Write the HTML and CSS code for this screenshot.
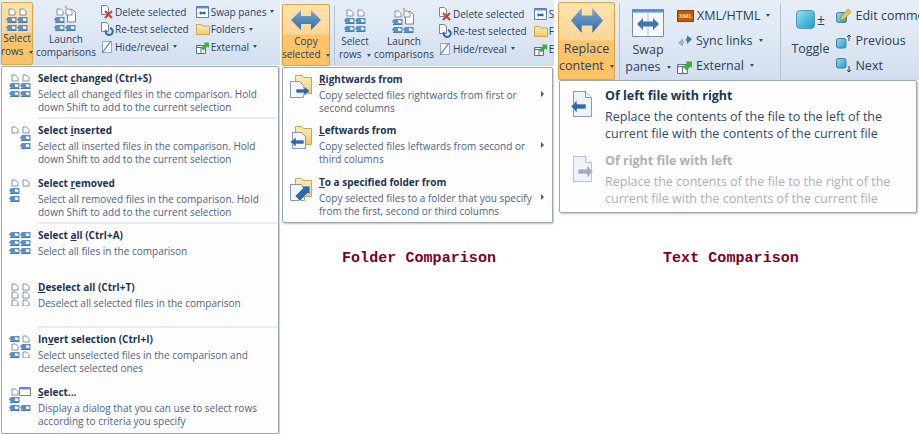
FILE: index.html
```html
<!DOCTYPE html>
<html lang="en">
<head>
    <meta charset="UTF-8">
    <title>Select rows, Copy selected and Replace content menus</title>
    <link rel="stylesheet" href="styles.css">
</head>
<body>
    <!-- Shared icon parts -->
    <svg class="icon-defs" width="0" height="0">
        <defs>
            <linearGradient id="blue-arrow" x1="0" y1="0" x2="0" y2="1">
                <stop offset="0" stop-color="#7fa6d0"/>
                <stop offset="1" stop-color="#2f6aa6"/>
            </linearGradient>
            <linearGradient id="aqua" x1="0" y1="0" x2="1" y2="1">
                <stop offset="0" stop-color="#8fe0f2"/>
                <stop offset="1" stop-color="#1b9ccb"/>
            </linearGradient>
            <linearGradient id="folder" x1="0" y1="0" x2="0" y2="1">
                <stop offset="0" stop-color="#fdf0b8"/>
                <stop offset="1" stop-color="#eec966"/>
            </linearGradient>
        </defs>
        <symbol id="pg" viewBox="0 0 8 8">
            <path d="M1 1h3.500L7 3.500V7H1z" fill="#fff" stroke="#76849a" stroke-width=".9"/>
        </symbol>
        <symbol id="bl" viewBox="0 0 11 7">
            <path d="M0 3.500 2 1h8.500v5H2z" fill="#5a90c6"/>
            <path d="M6 2.200h2.200l1 1v1.700H6z" fill="#f4f8fc"/>
            <path d="M1 6h9.500v1H1z" fill="#4a7cae"/>
        </symbol>
        <symbol id="dbl-arrow" viewBox="0 0 30 20">
            <path d="M0 10 10 0v6h10V0l10 10-10 10v-6H10v6z" fill="url(#blue-arrow)"/>
        </symbol>
    </svg>

    <!-- Folder comparison: Select rows -->
    <div class="shot shot-left">
        <div class="ribbon">
            <div class="rb-big rb-active rb-select">
                <svg class="rb-icon" width="24" height="24" viewBox="0 0 24 24">
                    <use href="#pg" x="3" y="1" width="8" height="8"/><use href="#pg" x="14" y="1" width="8" height="8"/>
                    <use href="#bl" x="1" y="9" width="11" height="7"/><use href="#bl" x="12" y="9" width="11" height="7"/>
                    <use href="#bl" x="1" y="17" width="11" height="7"/><use href="#bl" x="12" y="17" width="11" height="7"/>
                </svg>
                <span class="rb-label">Select</span>
                <span class="rb-label">rows <i class="caret"></i></span>
            </div>
            <div class="rb-big rb-launch">
                <svg class="rb-icon" width="26" height="26" viewBox="0 0 26 26">
                    <path d="M14.500 4.500h5l3 3V17h-8z" fill="#fff" stroke="#76849a"/>
                    <circle cx="13" cy="2" r="1" fill="#e8896a"/>
                    <use href="#pg" x="3" y="3" width="8" height="8"/><use href="#pg" x="12" y="3" width="8" height="8"/>
                    <use href="#bl" x="1" y="11" width="11" height="7"/>
                    <use href="#bl" x="1" y="19" width="11" height="7"/><use href="#bl" x="12" y="19" width="11" height="7"/>
                </svg>
                <span class="rb-label">Launch</span>
                <span class="rb-label">comparisons</span>
            </div>
            <div class="rb-col rb-col-first">
                <div class="rb-row">
                    <svg width="14" height="14" viewBox="0 0 14 14"><path d="M1.500 .5h5l2 2v7h-7z" fill="#fff" stroke="#76849a"/><path d="m5 6 7 7m0-7-7 7" stroke="#d2402c" stroke-width="2.200"/></svg>
                    Delete selected
                </div>
                <div class="rb-row">
                    <svg width="14" height="14" viewBox="0 0 14 14"><path d="M1.500 .5h5l2 2v7h-7z" fill="#fff" stroke="#76849a"/><path d="M6 8a3.500 3.500 0 1 0 4-2" fill="none" stroke="#2f6aa6" stroke-width="2"/></svg>
                    Re-test selected
                </div>
                <div class="rb-row">
                    <svg width="14" height="14" viewBox="0 0 14 14"><path d="M2.500 1.500h9v11h-9z" fill="#f4f7fb" stroke="#9aa8bb"/><path d="m2 13 9-12" stroke="#5c7fa8" stroke-width="1.200"/></svg>
                    Hide/reveal <i class="caret"></i>
                </div>
            </div>
            <div class="rb-col">
                <div class="rb-row">
                    <svg width="14" height="14" viewBox="0 0 14 14"><path d="M.5 1.500h12v11H.5z" fill="#fff" stroke="#5d7fae"/><path d="M1 2h11v1.500H1z" fill="#5d8fd6"/><path d="m3 8 2-2v1h3V6l2 2-2 2V9H5v1z" fill="#2f6aa6"/></svg>
                    Swap panes <i class="caret"></i>
                </div>
                <div class="rb-row">
                    <svg width="14" height="14" viewBox="0 0 14 14"><path d="M.5 2.500h5l1 1.500h7v8.500H.5z" fill="url(#folder)" stroke="#c9a64f"/></svg>
                    Folders <i class="caret"></i>
                </div>
                <div class="rb-row">
                    <svg width="14" height="14" viewBox="0 0 14 14"><path d="M.5 5.500h9v8h-9zM.5 7.500h9M5 7.500v6" fill="#fff" stroke="#5a6f8c"/><path d="m5 8 4-4-1.500-1.500H13V8l-1.500-1.500-4 4z" fill="#3fae3f"/></svg>
                    External <i class="caret"></i>
                </div>
            </div>
        </div>
        <div class="menu menu-rows">
            <div class="menu-item item-sep">
                <svg class="menu-icon" width="24" height="24" viewBox="0 0 24 24">
                    <use href="#pg" x="3" y="1" width="8" height="8"/><use href="#pg" x="14" y="1" width="8" height="8"/>
                    <use href="#bl" x="1" y="9" width="11" height="7"/><use href="#bl" x="12" y="9" width="11" height="7"/>
                    <use href="#bl" x="1" y="17" width="11" height="7"/><use href="#bl" x="12" y="17" width="11" height="7"/>
                </svg>
                <div class="menu-text">
                    <div class="menu-title">Select <u>c</u>hanged (Ctrl+S)</div>
                    <div class="menu-desc">Select all changed files in the comparison. Hold down Shift to add to the current selection</div>
                </div>
            </div>
            <div class="menu-item">
                <svg class="menu-icon" width="24" height="24" viewBox="0 0 24 24">
                    <use href="#pg" x="3" y="1" width="8" height="8"/><use href="#pg" x="14" y="1" width="8" height="8"/>
                    <use href="#bl" x="12" y="9" width="11" height="7"/>
                    <use href="#bl" x="12" y="17" width="11" height="7"/>
                </svg>
                <div class="menu-text">
                    <div class="menu-title">Select <u>i</u>nserted</div>
                    <div class="menu-desc">Select all inserted files in the comparison. Hold down Shift to add to the current selection</div>
                </div>
            </div>
            <div class="menu-item item-sep">
                <svg class="menu-icon" width="24" height="24" viewBox="0 0 24 24">
                    <use href="#pg" x="3" y="1" width="8" height="8"/><use href="#pg" x="14" y="1" width="8" height="8"/>
                    <use href="#bl" x="1" y="9" width="11" height="7"/>
                    <use href="#bl" x="1" y="17" width="11" height="7"/>
                </svg>
                <div class="menu-text">
                    <div class="menu-title">Select <u>r</u>emoved</div>
                    <div class="menu-desc">Select all removed files in the comparison. Hold down Shift to add to the current selection</div>
                </div>
            </div>
            <div class="menu-item">
                <svg class="menu-icon" width="24" height="24" viewBox="0 0 24 24">
                    <use href="#bl" x="1" y="1" width="11" height="7"/><use href="#bl" x="12" y="1" width="11" height="7"/>
                    <use href="#bl" x="1" y="9" width="11" height="7"/><use href="#bl" x="12" y="9" width="11" height="7"/>
                    <use href="#bl" x="1" y="17" width="11" height="7"/><use href="#bl" x="12" y="17" width="11" height="7"/>
                </svg>
                <div class="menu-text">
                    <div class="menu-title">Select <u>a</u>ll (Ctrl+A)</div>
                    <div class="menu-desc">Select all files in the comparison</div>
                </div>
            </div>
            <div class="menu-item item-sep">
                <svg class="menu-icon" width="24" height="24" viewBox="0 0 24 24">
                    <use href="#pg" x="3" y="1" width="8" height="8"/><use href="#pg" x="14" y="1" width="8" height="8"/>
                    <use href="#pg" x="3" y="9" width="8" height="8"/><use href="#pg" x="14" y="9" width="8" height="8"/>
                    <use href="#pg" x="3" y="17" width="8" height="8"/><use href="#pg" x="14" y="17" width="8" height="8"/>
                </svg>
                <div class="menu-text">
                    <div class="menu-title"><u>D</u>eselect all (Ctrl+T)</div>
                    <div class="menu-desc">Deselect all selected files in the comparison</div>
                </div>
            </div>
            <div class="menu-item">
                <svg class="menu-icon" width="24" height="24" viewBox="0 0 24 24">
                    <use href="#bl" x="1" y="1" width="11" height="7"/><use href="#pg" x="14" y="1" width="8" height="8"/>
                    <use href="#pg" x="3" y="9" width="8" height="8"/><use href="#bl" x="12" y="9" width="11" height="7"/>
                    <use href="#bl" x="1" y="17" width="11" height="7"/><use href="#pg" x="14" y="17" width="8" height="8"/>
                </svg>
                <div class="menu-text">
                    <div class="menu-title">In<u>v</u>ert selection (Ctrl+I)</div>
                    <div class="menu-desc">Select unselected files in the comparison and deselect selected ones</div>
                </div>
            </div>
            <div class="menu-item">
                <svg class="menu-icon" width="24" height="24" viewBox="0 0 24 24">
                    <use href="#pg" x="3" y="1" width="8" height="8"/>
                    <path d="M11.500 .5h11v8h-11z" fill="#fff" stroke="#6f86a8"/><path d="M12 1h10v1.500H12z" fill="#5d8fd6"/>
                    <use href="#bl" x="1" y="9" width="11" height="7"/>
                    <use href="#bl" x="1" y="17" width="11" height="7"/><use href="#bl" x="12" y="17" width="11" height="7"/>
                </svg>
                <div class="menu-text">
                    <div class="menu-title"><u>S</u>elect...</div>
                    <div class="menu-desc">Display a dialog that you can use to select rows according to criteria you specify</div>
                </div>
            </div>
        </div>
    </div>

    <!-- Folder comparison: Copy selected -->
    <div class="shot shot-mid">
        <div class="ribbon">
            <div class="rb-big rb-active rb-copy">
                <svg class="rb-icon" width="30" height="20"><use href="#dbl-arrow" width="30" height="20"/></svg>
                <span class="rb-label">Copy</span>
                <span class="rb-label">selected <i class="caret"></i></span>
            </div>
            <div class="rb-divider"></div>
            <div class="rb-big rb-select">
                <svg class="rb-icon" width="24" height="24" viewBox="0 0 24 24">
                    <use href="#pg" x="3" y="1" width="8" height="8"/><use href="#pg" x="14" y="1" width="8" height="8"/>
                    <use href="#bl" x="1" y="9" width="11" height="7"/><use href="#bl" x="12" y="9" width="11" height="7"/>
                    <use href="#bl" x="1" y="17" width="11" height="7"/><use href="#bl" x="12" y="17" width="11" height="7"/>
                </svg>
                <span class="rb-label">Select</span>
                <span class="rb-label">rows <i class="caret"></i></span>
            </div>
            <div class="rb-big rb-launch">
                <svg class="rb-icon" width="26" height="26" viewBox="0 0 26 26">
                    <path d="M14.500 4.500h5l3 3V17h-8z" fill="#fff" stroke="#76849a"/>
                    <circle cx="13" cy="2" r="1" fill="#e8896a"/>
                    <use href="#pg" x="3" y="3" width="8" height="8"/><use href="#pg" x="12" y="3" width="8" height="8"/>
                    <use href="#bl" x="1" y="11" width="11" height="7"/>
                    <use href="#bl" x="1" y="19" width="11" height="7"/><use href="#bl" x="12" y="19" width="11" height="7"/>
                </svg>
                <span class="rb-label">Launch</span>
                <span class="rb-label">comparisons</span>
            </div>
            <div class="rb-col rb-col-first">
                <div class="rb-row">
                    <svg width="14" height="14" viewBox="0 0 14 14"><path d="M1.500 .5h5l2 2v7h-7z" fill="#fff" stroke="#76849a"/><path d="m5 6 7 7m0-7-7 7" stroke="#d2402c" stroke-width="2.200"/></svg>
                    Delete selected
                </div>
                <div class="rb-row">
                    <svg width="14" height="14" viewBox="0 0 14 14"><path d="M1.500 .5h5l2 2v7h-7z" fill="#fff" stroke="#76849a"/><path d="M6 8a3.500 3.500 0 1 0 4-2" fill="none" stroke="#2f6aa6" stroke-width="2"/></svg>
                    Re-test selected
                </div>
                <div class="rb-row">
                    <svg width="14" height="14" viewBox="0 0 14 14"><path d="M2.500 1.500h9v11h-9z" fill="#f4f7fb" stroke="#9aa8bb"/><path d="m2 13 9-12" stroke="#5c7fa8" stroke-width="1.200"/></svg>
                    Hide/reveal <i class="caret"></i>
                </div>
            </div>
            <div class="rb-col">
                <div class="rb-row">
                    <svg width="14" height="14" viewBox="0 0 14 14"><path d="M.5 1.500h12v11H.5z" fill="#fff" stroke="#5d7fae"/><path d="M1 2h11v1.500H1z" fill="#5d8fd6"/><path d="m3 8 2-2v1h3V6l2 2-2 2V9H5v1z" fill="#2f6aa6"/></svg>
                    Swap
                </div>
                <div class="rb-row">
                    <svg width="14" height="14" viewBox="0 0 14 14"><path d="M.5 2.500h5l1 1.500h7v8.500H.5z" fill="url(#folder)" stroke="#c9a64f"/></svg>
                    Folders
                </div>
                <div class="rb-row">
                    <svg width="14" height="14" viewBox="0 0 14 14"><path d="M.5 5.500h9v8h-9zM.5 7.500h9M5 7.500v6" fill="#fff" stroke="#5a6f8c"/><path d="m5 8 4-4-1.500-1.500H13V8l-1.500-1.500-4 4z" fill="#3fae3f"/></svg>
                    External
                </div>
            </div>
        </div>
        <div class="menu menu-copy">
            <div class="menu-item">
                <svg class="menu-icon" width="24" height="26" viewBox="0 0 24 26">
                    <path d="M6.500 1.500h6l2 2h8v16h-16z" fill="url(#folder)" stroke="#c9a64f"/>
                    <path d="M1.500 7.500h9l4 4v12h-13z" fill="#f2f5fb" stroke="#8a97ad"/>
                    <path d="M7 15h8v-3l6 5-6 5v-3H7z" fill="#2f6aa6" stroke="#fff" stroke-width=".6"/>
                </svg>
                <div class="menu-text">
                    <div class="menu-title"><u>R</u>ightwards from</div>
                    <div class="menu-desc">Copy selected files rightwards from first or second columns</div>
                </div>
                <i class="chevron"></i>
            </div>
            <div class="menu-item">
                <svg class="menu-icon" width="24" height="26" viewBox="0 0 24 26">
                    <path d="M6.500 1.500h6l2 2h8v16h-16z" fill="url(#folder)" stroke="#c9a64f"/>
                    <path d="M3.500 7.500h9l4 4v12h-13z" fill="#f2f5fb" stroke="#8a97ad"/>
                    <path d="M15 15H7v-3l-6 5 6 5v-3h8z" fill="#2f6aa6" stroke="#fff" stroke-width=".6"/>
                </svg>
                <div class="menu-text">
                    <div class="menu-title"><u>L</u>eftwards from</div>
                    <div class="menu-desc">Copy selected files leftwards from second or third columns</div>
                </div>
                <i class="chevron"></i>
            </div>
            <div class="menu-item">
                <svg class="menu-icon" width="24" height="26" viewBox="0 0 24 26">
                    <path d="M6.500 1.500h6l2 2h8v16h-16z" fill="url(#folder)" stroke="#c9a64f"/>
                    <path d="M1.500 7.500h11l3 3v13h-14z" fill="#f2f5fb" stroke="#8a97ad"/>
                    <path d="m6 19 8-8-2-2h9v9l-2-2-8 8z" fill="#2f6aa6" stroke="#fff" stroke-width=".6"/>
                </svg>
                <div class="menu-text">
                    <div class="menu-title"><u>T</u>o a specified folder from</div>
                    <div class="menu-desc">Copy selected files to a folder that you specify from the first, second or third columns</div>
                </div>
                <i class="chevron"></i>
            </div>
        </div>
        <div class="caption caption-folder">Folder Comparison</div>
    </div>

    <!-- Text comparison: Replace content -->
    <div class="shot shot-right">
        <div class="ribbon">
            <div class="rb-big rb-active rb-replace">
                <svg class="rb-icon" width="32" height="25" viewBox="0 0 30 20" preserveAspectRatio="none"><use href="#dbl-arrow" width="30" height="20"/></svg>
                <span class="rb-label">Replace</span>
                <span class="rb-label">content <i class="caret"></i></span>
            </div>
            <div class="rb-divider"></div>
            <div class="rb-big rb-swap">
                <svg class="rb-icon" width="32" height="28" viewBox="0 0 32 28">
                    <path d="M.5.5h31v27H.5z" fill="#f6f8fb" stroke="#7f8da3"/>
                    <path d="M0 0h32v3.500H0z" fill="#5d8fd6"/>
                    <path d="M16 3.500v24" stroke="#b5bfce"/>
                    <path d="m5 15 6-6v3.500h10V9l6 6-6 6v-3.500H11V21z" fill="#3d77b0"/>
                </svg>
                <span class="rb-label">Swap</span>
                <span class="rb-label">panes <i class="caret"></i></span>
            </div>
            <div class="rb-col rb-col-xml">
                <div class="rb-row">
                    <span class="xml-badge">XML</span>
                    XML/HTML <i class="caret"></i>
                </div>
                <div class="rb-row">
                    <svg width="16" height="16" viewBox="0 0 16 16"><path d="M1 10 6 5v2.500L7.500 9 6 11v2.500z" fill="#9bb0cb"/><path d="m15 6-5 5V8.500L8.500 7 10 5V2.500z" fill="#3d77b0"/></svg>
                    Sync links <i class="caret"></i>
                </div>
                <div class="rb-row">
                    <svg width="16" height="16" viewBox="0 0 16 16"><path d="M.5 6.500h10v9H.5zM.5 8.500h10M5.500 8.500v7" fill="#fff" stroke="#5a6f8c"/><path d="m6 9 4-4-1.500-1.500H15V10l-1.500-1.500-4 4z" fill="#3fae3f"/></svg>
                    External <i class="caret"></i>
                </div>
            </div>
            <div class="rb-divider rb-divider-wide"></div>
            <div class="rb-big rb-toggle">
                <div class="toggle-icon"><span class="toggle-box"></span><span class="toggle-sign">±</span></div>
                <span class="rb-label">Toggle</span>
            </div>
            <div class="rb-col rb-col-comments">
                <div class="rb-row">
                    <svg width="16" height="16" viewBox="0 0 16 16"><rect x=".5" y="4.500" width="10" height="10" rx="2" fill="url(#aqua)" stroke="#4a7c96"/><path d="m5 9 7-8 3 2.500-7 8-3.500 1z" fill="#f3c14b" stroke="#a3772a" stroke-width=".6"/></svg>
                    Edit comment
                </div>
                <div class="rb-row">
                    <svg width="16" height="16" viewBox="0 0 16 16"><rect x=".5" y="5.500" width="9.500" height="9.500" rx="2" fill="url(#aqua)" stroke="#4a7c96"/><path d="M13 8V2m-2 2 2-2 2 2" fill="none" stroke="#333f50"/></svg>
                    Previous
                </div>
                <div class="rb-row">
                    <svg width="16" height="16" viewBox="0 0 16 16"><rect x=".5" y=".5" width="9.500" height="9.500" rx="2" fill="url(#aqua)" stroke="#4a7c96"/><path d="M13 8v6m-2-2 2 2 2-2" fill="none" stroke="#333f50"/></svg>
                    Next
                </div>
            </div>
        </div>
        <div class="menu menu-replace">
            <div class="menu-item">
                <svg class="menu-icon" width="28" height="28" viewBox="0 0 28 28">
                    <path d="M5.500 1.500h12l6 6v19h-18z" fill="#eef3fb" stroke="#8a9ab5"/>
                    <path d="M17.500 1.500v6h6" fill="#fff" stroke="#8a9ab5"/>
                    <path d="M18 12v5H9v4l-6-6.500L9 8v4z" fill="#2f6aa6" stroke="#fff" stroke-width=".6" transform="translate(0 2)"/>
                </svg>
                <div class="menu-text">
                    <div class="menu-title">Of left file with right</div>
                    <div class="menu-desc">Replace the contents of the file to the left of the current file with the contents of the current file</div>
                </div>
            </div>
            <div class="menu-item item-disabled">
                <svg class="menu-icon" width="28" height="28" viewBox="0 0 28 28">
                    <path d="M5.500 1.500h12l6 6v19h-18z" fill="#eef3fb" stroke="#b4c1d8"/>
                    <path d="M17.500 1.500v6h6" fill="#fff" stroke="#b4c1d8"/>
                    <path d="M10 12v5h9v4l6-6.500L19 8v4z" fill="#9dadc8" stroke="#fff" stroke-width=".6" transform="translate(0 2)"/>
                </svg>
                <div class="menu-text">
                    <div class="menu-title">Of right file with left</div>
                    <div class="menu-desc">Replace the contents of the file to the right of the current file with the contents of the current file</div>
                </div>
            </div>
        </div>
        <div class="caption caption-text">Text Comparison</div>
    </div>
</body>
</html>
```

FILE: styles.css
```css
/* Page */
body {
    margin: 0;
    width: 919px;
    height: 434px;
    display: flex;
    overflow: hidden;
    background: #fff;
    font-family: "Open Sans", sans-serif;
    color: #1d3557;
}

.icon-defs {
    flex: none;
}

/* The three cut-outs */
.shot {
    flex: none;
    overflow: hidden;
}

.shot-left {
    width: 280px;
    font-size: 10px;
}

.shot-mid {
    width: 273px;
    margin-left: 1px;
    font-size: 10px;
}

.shot-right {
    width: 361px;
    margin-left: 4px;
    font-size: 12.5px;
}

/* Ribbon */
.ribbon {
    display: flex;
    align-items: flex-start;
    overflow: hidden;
    white-space: nowrap;
    background: linear-gradient(#e6eef8, #dde7f3 55%, #d1deee);
    color: #2a3f5f;
}

.shot-left .ribbon {
    height: 63px;
    padding: 2px 0 0 1px;
}

.shot-mid .ribbon {
    height: 62px;
    padding: 4px 0 0 1px;
}

.shot-right .ribbon {
    height: 78px;
    padding: 2px 0 0 0;
}

.rb-big {
    flex: none;
    display: flex;
    flex-direction: column;
    align-items: center;
    box-sizing: border-box;
    line-height: 13px;
}

.rb-active {
    height: 100%;
    border: 1px solid #dba544;
    border-radius: 2px;
    background: linear-gradient(#fee2ad, #fdd797 48%, #fcc46b 50%, #fbc266);
}

.rb-select {
    width: 32px;
}

.rb-launch {
    width: 62px;
    margin-left: 2px;
}

.rb-launch .rb-icon {
    margin: 3px 0 2px;
}

.rb-select .rb-icon {
    margin: 4px 0 3px;
}

.rb-active.rb-select .rb-icon {
    margin-bottom: 1px;
}

.rb-copy {
    width: 48px;
}

.rb-copy .rb-icon {
    margin: 5px 0;
}

.rb-divider {
    flex: none;
    width: 1px;
    align-self: stretch;
    margin: 1px 4px;
    background: #b4c3d6;
}

.rb-col {
    flex: none;
    display: flex;
    flex-direction: column;
    margin-left: 7px;
}

.rb-col-first {
    margin-left: 3px;
}

.rb-row {
    display: flex;
    align-items: center;
    gap: 1px;
    height: 17.500px;
}

.shot-left .rb-row:first-child,
.shot-mid .rb-row:first-child {
    margin-top: 1px;
}

.caret {
    display: inline-block;
    width: 0;
    height: 0;
    margin-left: 3px;
    border-top: 3px solid #3c4d66;
    border-left: 2.500px solid transparent;
    border-right: 2.500px solid transparent;
    vertical-align: middle;
}

/* Bigger ribbon on the text comparison */
.shot-right .rb-big {
    line-height: 17px;
}

.rb-replace {
    width: 57px;
}

.rb-replace .rb-icon {
    margin: 5px 0 7px;
}

.rb-swap {
    width: 48px;
}

.rb-swap .rb-icon {
    margin: 7px 0 4px;
}

.rb-col-xml {
    margin-left: 5px;
    padding-top: 1px;
}

.rb-divider-wide {
    margin-left: 10px;
}

.shot-right .rb-row {
    height: 25px;
    gap: 3px;
}

.xml-badge {
    width: 15px;
    height: 10px;
    background: #c4590c;
    border: 1px solid #8e3f06;
    color: #ffe3a6;
    font-size: 6px;
    font-weight: bold;
    line-height: 10px;
    text-align: center;
}

.rb-toggle {
    width: 46px;
    margin-left: 2px;
}

.toggle-icon {
    display: flex;
    align-items: center;
    height: 24px;
    margin: 5px 0 9px;
}

.toggle-box {
    width: 17px;
    height: 17px;
    border: 1px solid #5a95b3;
    border-radius: 4px;
    background: linear-gradient(135deg, #8fe0f2, #1b9ccb);
}

.toggle-sign {
    margin-left: 2px;
    font-size: 14px;
}

.rb-col-comments {
    margin-left: 3px;
    padding-top: 1px;
}

/* Drop-down menus */
.menu {
    display: flex;
    flex-direction: column;
    box-sizing: border-box;
    margin: 1px 1px 0 1px;
    border: 1px solid #9ea7b4;
    border-radius: 2px;
    background: #fdfdfe;
    box-shadow: 1px 1px 2px rgba(0, 0, 0, 0.25);
}

.menu-rows {
    height: 368px;
}

.menu-copy {
    height: 156px;
}

.menu-replace {
    height: 133px;
    margin: 0 2px 0 1px;
}

.menu-item {
    position: relative;
    flex: 1 1 0;
    display: flex;
    align-items: flex-start;
}

.menu-replace .menu-item {
    flex: 0 0 65px;
}

.item-sep::after {
    content: "";
    position: absolute;
    left: 35px;
    right: 0;
    bottom: 0;
    height: 2px;
    background: #e6ecf4;
}

.menu-icon {
    flex: none;
    margin: 6px 6px 0 6px;
}

.menu-text {
    flex: 1;
    padding-top: 4px;
}

.menu-title {
    font-weight: bold;
    line-height: 14px;
    color: #1b3554;
}

.menu-desc {
    margin-top: 3px;
    line-height: 13px;
    color: #50637d;
}

.menu-copy .menu-text {
    padding-right: 14px;
}

.chevron {
    position: absolute;
    top: 23px;
    right: 8px;
    width: 0;
    height: 0;
    border-left: 3px solid #4d5a6d;
    border-top: 3px solid transparent;
    border-bottom: 3px solid transparent;
}

.menu-replace .menu-icon {
    margin: 9px 9px 0 8px;
}

.menu-replace .menu-text {
    padding: 6px 20px 0 0;
}

.menu-replace .menu-title {
    line-height: 17px;
}

.menu-replace .menu-desc {
    margin-top: 4px;
    line-height: 17px;
    color: #33496a;
}

.item-disabled .menu-title,
.item-disabled .menu-desc {
    color: #adb0b5;
}

/* Captions under the menus */
.caption {
    margin-top: 27px;
    font-family: "Liberation Mono", monospace;
    font-size: 15px;
    font-weight: bold;
    letter-spacing: 0.06px;
    line-height: 17px;
    color: #7d0022;
}

.caption-folder {
    padding-left: 61px;
}

.caption-text {
    padding-left: 105px;
    margin-top: 37px;
}
```
